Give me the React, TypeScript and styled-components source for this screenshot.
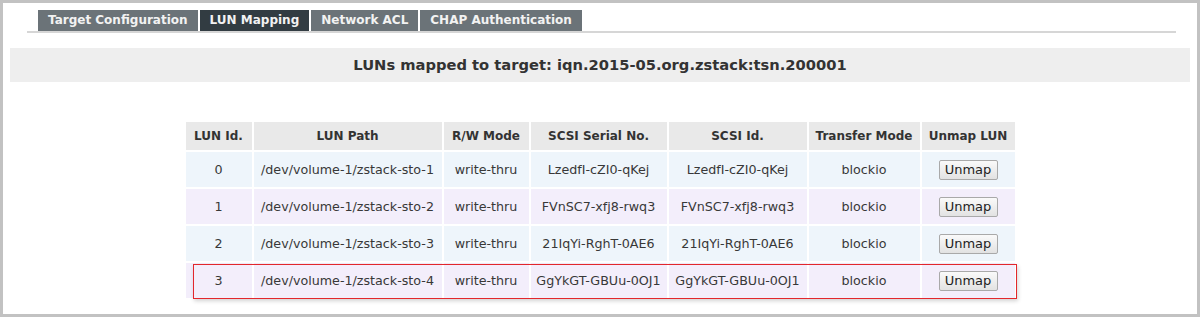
import React from "react";
import styled, { createGlobalStyle } from "styled-components";

const GlobalStyle = createGlobalStyle`
  body {
    margin: 0;
    background: #ffffff;
    font-family: "DejaVu Sans", Verdana, sans-serif;
    color: #333333;
  }
`;

interface LunRow {
  id: number;
  path: string;
  mode: string;
  serial: string;
  scsiId: string;
  transfer: string;
}

const rows: LunRow[] = [
  { id: 0, path: "/dev/volume-1/zstack-sto-1", mode: "write-thru", serial: "LzedfI-cZI0-qKej", scsiId: "LzedfI-cZI0-qKej", transfer: "blockio" },
  { id: 1, path: "/dev/volume-1/zstack-sto-2", mode: "write-thru", serial: "FVnSC7-xfj8-rwq3", scsiId: "FVnSC7-xfj8-rwq3", transfer: "blockio" },
  { id: 2, path: "/dev/volume-1/zstack-sto-3", mode: "write-thru", serial: "21IqYi-RghT-0AE6", scsiId: "21IqYi-RghT-0AE6", transfer: "blockio" },
  { id: 3, path: "/dev/volume-1/zstack-sto-4", mode: "write-thru", serial: "GgYkGT-GBUu-0OJ1", scsiId: "GgYkGT-GBUu-0OJ1", transfer: "blockio" },
];

const tabs = ["Target Configuration", "LUN Mapping", "Network ACL", "CHAP Authentication"];
// widths of the cells, the 2px spacing between them comes on top
const colWidths = [66, 188, 85, 136, 138, 111, 93];
const headers = ["LUN Id.", "LUN Path", "R/W Mode", "SCSI Serial No.", "SCSI Id.", "Transfer Mode", "Unmap LUN"];

const App: React.FC = () => {
  return (
    <>
      <GlobalStyle />
      <Frame>
        <TabBar>
          {tabs.map((t) => (
            <Tab key={t} active={t === "LUN Mapping"}>
              {t}
            </Tab>
          ))}
        </TabBar>
        <TitleBand>LUNs mapped to target: iqn.2015-05.org.zstack:tsn.200001</TitleBand>
        <TableWrap>
          <Table>
            <colgroup>
              {colWidths.map((w, i) => (
                <col key={i} style={{ width: w }} />
              ))}
            </colgroup>
            <thead>
              <tr>
                {headers.map((h) => (
                  <Th key={h}>{h}</Th>
                ))}
              </tr>
            </thead>
            <tbody>
              {rows.map((r) => (
                <Tr key={r.id} odd={r.id % 2 === 1}>
                  <Td>{r.id}</Td>
                  <Td>{r.path}</Td>
                  <Td>{r.mode}</Td>
                  <Td>{r.serial}</Td>
                  <Td>{r.scsiId}</Td>
                  <Td>{r.transfer}</Td>
                  <Td>
                    <UnmapButton>Unmap</UnmapButton>
                  </Td>
                </Tr>
              ))}
            </tbody>
          </Table>
          <Highlight />
        </TableWrap>
      </Frame>
    </>
  );
};

export default App;

const Frame = styled.div`
  width: 1200px;
  height: 317px;
  box-sizing: border-box;
  border: 3px solid #c2c2c2;
  background: #ffffff;
  overflow: hidden;
`;

const TabBar = styled.div`
  display: flex;
  gap: 2px;
  margin: 7px 21px 0 24px;
  padding-left: 11px;
  border-bottom: 2px solid #d6d6d6;
`;

const Tab = styled.div<{ active?: boolean }>`
  height: 21px;
  line-height: 21px;
  padding: 0 10px;
  font-size: 12px;
  font-weight: bold;
  color: #f2f2f2;
  background: ${(p) => (p.active ? "#323c42" : "#6b7378")};
`;

const TitleBand = styled.div`
  margin: 15px 7px 0 7px;
  height: 34px;
  line-height: 34px;
  background: #eeeeee;
  text-align: center;
  font-size: 14.7px;
  font-weight: bold;
  color: #333333;
`;

const TableWrap = styled.div`
  position: relative;
  width: 833px;
  margin: 38px auto 0 auto;
`;

const Table = styled.table`
  table-layout: fixed;
  border-collapse: separate;
  border-spacing: 2px;
  width: 833px;
  font-size: 12.7px;
  color: #383838;
`;

const Th = styled.th`
  height: 28px;
  padding: 0;
  background: #e9e9e9;
  font-size: 12px;
  font-weight: bold;
  color: #333333;
  text-align: center;
`;

const Tr = styled.tr<{ odd?: boolean }>`
  background: ${(p) => (p.odd ? "#f3eefb" : "#eef5fb")};
`;

const Td = styled.td`
  height: 35px;
  padding: 0;
  text-align: center;
  white-space: nowrap;
`;

const UnmapButton = styled.button`
  width: 59px;
  height: 20px;
  padding: 0;
  font-family: "DejaVu Sans", Verdana, sans-serif;
  font-size: 13px;
  color: #222222;
  background: linear-gradient(#fafafa, #e2e2e2);
  border: 1px solid #a9a9a9;
  border-radius: 2px;
`;

const Highlight = styled.div`
  position: absolute;
  left: 9px;
  top: 144px;
  width: 822px;
  height: 33px;
  border: 1.5px solid #e3272c;
  box-shadow: 1px 2px 4px rgba(0, 0, 0, 0.18);
  pointer-events: none;
`;
